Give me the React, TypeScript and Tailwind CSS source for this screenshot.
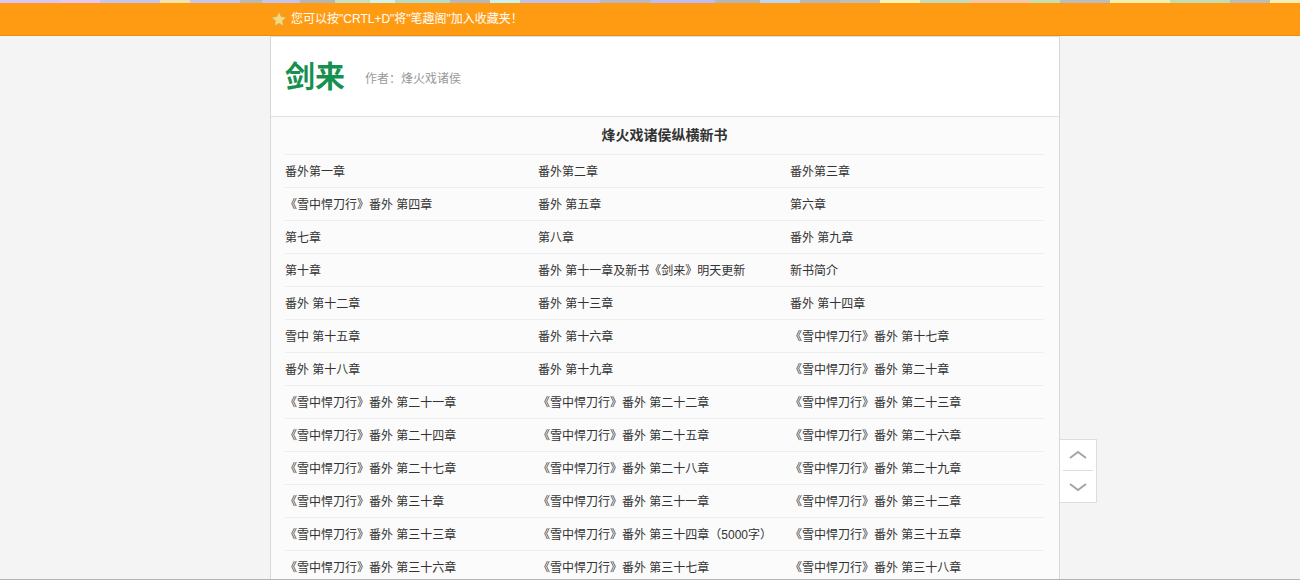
import React from 'react';

// the page's blurred banner picture, only its last 3px show above the orange bar
const stripColors: [number, number, string][] = [
  [0, 60, '#d9c6f5'], [60, 100, '#e8c8f0'], [100, 160, '#c8c4f0'], [160, 190, '#f5e6b0'], [190, 240, '#c9c6ee'],
  [240, 262, '#b9b9b9'], [262, 300, '#c4c4ee'], [300, 335, '#b5b5b5'], [335, 370, '#c5e0c5'], [370, 395, '#d0f5ee'],
  [395, 450, '#b4dcc8'], [450, 490, '#b8b8b8'], [490, 520, '#c8f5ee'], [520, 600, '#c0c0e8'], [600, 650, '#bdb8c0'],
  [650, 715, '#bcbcf8'], [715, 760, '#b6b6b6'], [760, 800, '#bcd8f4'], [800, 840, '#b8b8b8'], [840, 880, '#c0c0b8'],
  [880, 920, '#f9f4b8'], [920, 970, '#c4dcb8'], [970, 1030, '#f4c8a8'], [1030, 1060, '#c8e0b0'], [1060, 1110, '#bcbcbc'],
  [1110, 1170, '#f4f0b0'], [1170, 1230, '#c4dcb0'], [1230, 1270, '#bcbcb8'], [1270, 1300, '#f6f0b8'],
];

const chapters: string[][] = [
  ['番外第一章', '番外第二章', '番外第三章'],
  ['《雪中悍刀行》番外 第四章', '番外 第五章', '第六章'],
  ['第七章', '第八章', '番外 第九章'],
  ['第十章', '番外 第十一章及新书《剑来》明天更新', '新书简介'],
  ['番外 第十二章', '番外 第十三章', '番外 第十四章'],
  ['雪中 第十五章', '番外 第十六章', '《雪中悍刀行》番外 第十七章'],
  ['番外 第十八章', '番外 第十九章', '《雪中悍刀行》番外 第二十章'],
  ['《雪中悍刀行》番外 第二十一章', '《雪中悍刀行》番外 第二十二章', '《雪中悍刀行》番外 第二十三章'],
  ['《雪中悍刀行》番外 第二十四章', '《雪中悍刀行》番外 第二十五章', '《雪中悍刀行》番外 第二十六章'],
  ['《雪中悍刀行》番外 第二十七章', '《雪中悍刀行》番外 第二十八章', '《雪中悍刀行》番外 第二十九章'],
  ['《雪中悍刀行》番外 第三十章', '《雪中悍刀行》番外 第三十一章', '《雪中悍刀行》番外 第三十二章'],
  ['《雪中悍刀行》番外 第三十三章', '《雪中悍刀行》番外 第三十四章（5000字）', '《雪中悍刀行》番外 第三十五章'],
  ['《雪中悍刀行》番外 第三十六章', '《雪中悍刀行》番外 第三十七章', '《雪中悍刀行》番外 第三十八章'],
];

const App = () => {
  return (
    <div className="h-[586px] w-[1300px] overflow-hidden bg-white font-['Liberation_Sans','Noto_Sans_CJK_SC',sans-serif] text-xs text-[#333]">
      <div className="h-[579px] overflow-hidden bg-[#f4f4f4]">
        <svg className="block h-[3px] w-full" viewBox="0 0 1300 3" preserveAspectRatio="none">
          {stripColors.map(([from, to, color]) => (
            <rect key={from} x={from} y="0" width={to - from} height="3" fill={color} />
          ))}
        </svg>
        <div className="h-[33px] border-b border-[#e88f0c] bg-[#ff9b12]">
          <div className="ml-[270px] flex h-[32px] w-[790px] items-center pl-[1px] text-white">
            <svg className="mr-[4px] h-[16px] w-[16px]" viewBox="0 0 24 24">
              <path d="M12 1l3.4 7.4 8 .9-6 5.4 1.7 7.9L12 18.6l-7.1 4 1.7-7.9-6-5.4 8-.9z" fill="#f6d878" stroke="#c9a24a" strokeWidth="1" />
            </svg>
            <span>您可以按"CRTL+D"将"笔趣阁"加入收藏夹！</span>
          </div>
        </div>

        <div className="relative ml-[270px] w-[790px] border-x border-[#d8d8d8] bg-[#fbfbfb]">
          <div className="flex h-[81px] items-center border-y border-[#e0e0e0] bg-white pl-[14px]">
            <h1 className="mt-[1px] w-[80px] text-[30px] leading-[40px] font-bold text-[#15904f]">剑来</h1>
            <span className="mt-[5px] text-[#999]">作者：烽火戏诸侯</span>
          </div>
          <div className="px-[14px]">
            <h2 className="h-[37px] w-[759px] text-center text-sm leading-[37px] font-bold">烽火戏诸侯纵横新书</h2>
            {chapters.map((row) => (
              <div key={row[0]} className="grid h-[33px] w-[759px] grid-cols-[253px_252px_1fr] border-t border-[#eeeeee] leading-[34px]">
                {row.map((name) => (
                  <span key={name} className="whitespace-nowrap">{name}</span>
                ))}
              </div>
            ))}
          </div>

          <div className="absolute top-[403px] left-[789px] flex h-[64px] w-[37px] flex-col border border-l-0 border-[#dddddd] bg-white">
            <div className="flex h-[30px] items-center justify-center">
              <svg className="h-[10px] w-[18px]" viewBox="0 0 18 10" fill="none" stroke="#a4a4a4" strokeWidth="2">
                <path d="M1 8l8-6 8 6" />
              </svg>
            </div>
            <div className="mx-[3px] border-t border-[#dddddd]" />
            <div className="flex flex-1 items-center justify-center">
              <svg className="h-[10px] w-[18px]" viewBox="0 0 18 10" fill="none" stroke="#a4a4a4" strokeWidth="2">
                <path d="M1 2l8 6 8-6" />
              </svg>
            </div>
          </div>
        </div>
      </div>
      <div className="h-[1px] bg-[#b4b4b4]" />
    </div>
  );
};

export default App;
